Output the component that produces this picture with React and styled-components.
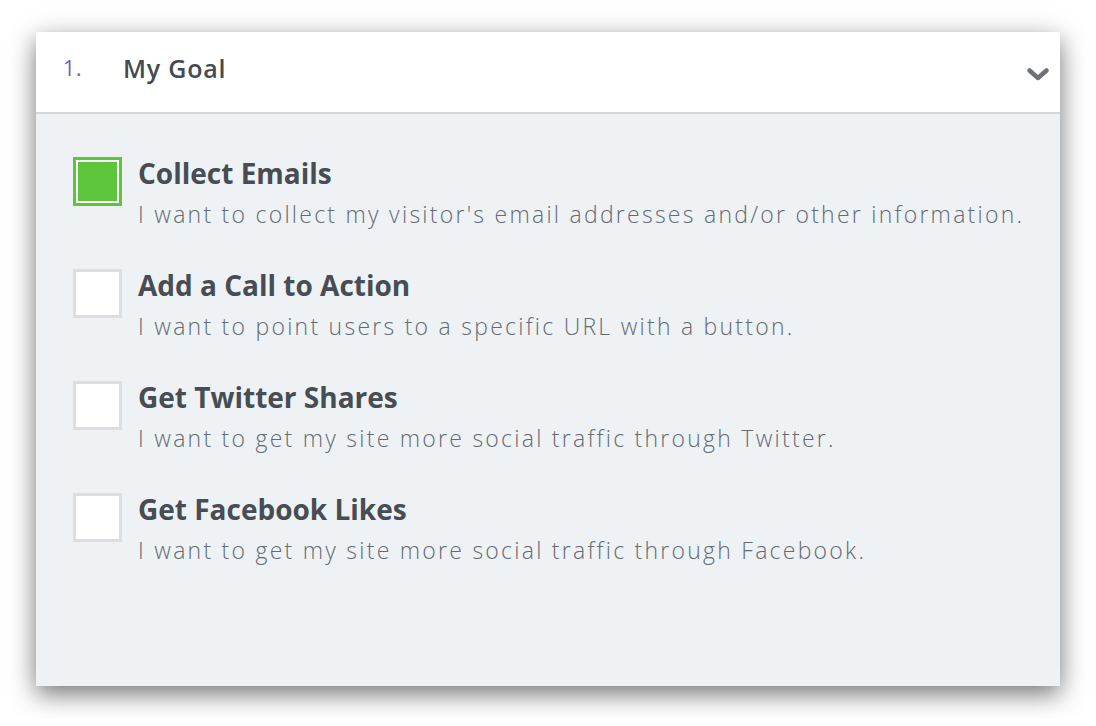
import React from "react";
import styled, { createGlobalStyle } from "styled-components";

const GlobalStyle = createGlobalStyle`
  body {
    margin: 0;
    background: #ffffff;
    font-family: "Open Sans", "Liberation Sans", sans-serif;
  }
`;

const Page = styled.div`
  padding: 32px 36px;
`;

const Panel = styled.section`
  width: 1024px;
  height: 654px;
  display: flex;
  flex-direction: column;
  background: #eef2f5;
  box-shadow: 0 8px 24px rgba(0, 0, 0, 0.55);
`;

const Header = styled.div`
  height: 82px;
  box-sizing: border-box;
  flex-shrink: 0;
  display: flex;
  align-items: center;
  background: #ffffff;
  border-bottom: 2px solid #d3d7db;
  padding: 0 10px 8px 27px;
`;

const StepNumber = styled.span`
  width: 60px;
  font-family: "Open Sans", sans-serif;
  font-weight: 500;
  font-size: 21px;
  letter-spacing: 1px;
  color: #6a5ec0;
`;

const HeaderTitle = styled.h2`
  flex: 1;
  margin: 0;
  font-family: "Open Sans", sans-serif;
  font-weight: 600;
  font-size: 25px;
  letter-spacing: 0.8px;
  color: #454b51;
`;

const Chevron = styled.svg`
  width: 24px;
  height: 15px;
  margin-top: 12px;
`;

const Options = styled.div`
  display: flex;
  flex-direction: column;
  gap: 34px;
  padding: 43px 30px 43px 37px;
`;

const Option = styled.label`
  display: flex;
  align-items: flex-start;
  gap: 16px;
  cursor: pointer;
`;

const Box = styled.span`
  box-sizing: border-box;
  width: 49px;
  height: 49px;
  flex-shrink: 0;
  border: 3px solid ${(p) => (p.checked ? "#5cc53c" : "#dcdedf")};
  background: ${(p) => (p.checked ? "#5cc53c" : "#ffffff")};
  box-shadow: ${(p) => (p.checked ? "inset 0 0 0 2px #ffffff" : "none")};
`;

const Text = styled.div`
  display: flex;
  flex-direction: column;
  margin-top: -3px;
`;

const Title = styled.div`
  font-family: "Open Sans", sans-serif;
  font-weight: 700;
  font-size: 28px;
  line-height: 38px;
  color: #474d53;
`;

const Desc = styled.div`
  font-family: "Open Sans", sans-serif;
  font-weight: 300;
  font-size: 23px;
  line-height: 42px;
  letter-spacing: 2.25px;
  white-space: nowrap;
  color: #656b72;
  margin-top: 1px;
`;

const options = [
  {
    title: "Collect Emails",
    desc: "I want to collect my visitor's email addresses and/or other information.",
    checked: true,
  },
  {
    title: "Add a Call to Action",
    desc: "I want to point users to a specific URL with a button.",
  },
  {
    title: "Get Twitter Shares",
    desc: "I want to get my site more social traffic through Twitter.",
  },
  {
    title: "Get Facebook Likes",
    desc: "I want to get my site more social traffic through Facebook.",
  },
];

const App = () => {
  return (
    <Page>
      <GlobalStyle />
      <Panel>
        <Header>
          <StepNumber>1.</StepNumber>
          <HeaderTitle>My Goal</HeaderTitle>
          <Chevron viewBox="0 0 24 15">
            <path
              d="M3.5 3.5 L12 11 L20.5 3.5"
              fill="none"
              stroke="#6f7378"
              strokeWidth="4.5"
              strokeLinecap="round"
              strokeLinejoin="round"
            />
          </Chevron>
        </Header>
        <Options>
          {options.map((o) => (
            <Option key={o.title}>
              <Box checked={o.checked} />
              <Text>
                <Title>{o.title}</Title>
                <Desc>{o.desc}</Desc>
              </Text>
            </Option>
          ))}
        </Options>
      </Panel>
    </Page>
  );
};

export default App;
